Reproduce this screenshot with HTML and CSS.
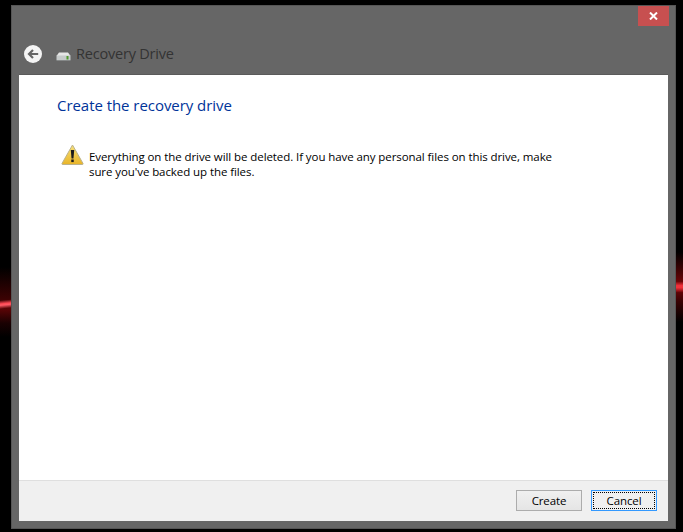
FILE: index.html
```html
<!DOCTYPE html>
<html lang="en">
<head>
<meta charset="utf-8">
<title>Recovery Drive</title>
<link rel="stylesheet" href="styles.css">
</head>
<body>
<div class="glow glow-left"></div>
<div class="glow glow-right"></div>
<div class="window">
  <div class="chrome">
    <div class="caption">
      <button class="close" aria-label="Close">
        <svg width="9" height="8" viewBox="0 0 9 8"><path d="M1 0.5 L8 7.5 M8 0.5 L1 7.5" stroke="#fff" stroke-width="2" fill="none"/></svg>
      </button>
    </div>
    <div class="nav">
      <svg class="back" width="20" height="20" viewBox="0 0 20 20">
        <circle cx="10" cy="10" r="9" fill="#f4f4f4"/>
        <path d="M15.2 10 H6.5 M10 6 L6 10 L10 14" stroke="#666" stroke-width="2.2" fill="none"/>
      </svg>
      <svg class="drive" width="15" height="9" viewBox="0 0 15 9">
        <path d="M3 0.5 H12 L14.5 4 H0.5 Z" fill="#e6e6e6"/>
        <rect x="0.5" y="3.5" width="14" height="4.5" fill="#c6caca"/>
        <rect x="0.5" y="8" width="14" height="1" fill="#858888"/>
        <rect x="10.5" y="4" width="2" height="3.5" fill="#4f9a2c"/>
      </svg>
      <span class="app-title">Recovery Drive</span>
    </div>
  </div>
  <div class="panel">
    <div class="main">
      <h1 class="heading">Create the recovery drive</h1>
      <div class="warning">
        <svg class="warn-icon" width="23" height="21" viewBox="0 0 24 21" preserveAspectRatio="none">
          <defs><linearGradient id="w" x1="0" y1="0" x2="0" y2="1"><stop offset="0" stop-color="#f8e27a"/><stop offset="1" stop-color="#e8b428"/></linearGradient></defs>
          <path d="M12 1 L23 19.5 Q23.3 20.5 22 20.5 H2 Q0.7 20.5 1 19.5 Z" fill="url(#w)" stroke="#b9b08a" stroke-width="1"/>
          <path d="M10.2 6 H13.8 L13 14.5 H11 Z" fill="#1c1c1c"/>
          <rect x="10.7" y="15.5" width="2.6" height="2.6" fill="#1c1c1c"/>
        </svg>
        <p class="warn-text">Everything on the drive will be deleted. If you have any personal files on this drive, make sure you've backed up the files.</p>
      </div>
    </div>
    <div class="footer">
      <button class="btn">Create</button>
      <button class="btn btn-default"><span class="focus">Cancel</span></button>
    </div>
  </div>
</div>
</body>
</html>
```
FILE: styles.css
```css
* { box-sizing: border-box; }
html, body { height: 100%; }
body {
  margin: 0;
  background: #000;
  padding: 5px 7px 3px 11px;
  font-family: "Open Sans", "Noto Sans", sans-serif;
  overflow: hidden;
  position: relative;
}
.glow { position: absolute; height: 70px; }
.glow-left {
  left: 0; top: 267px; width: 11px;
  background:
    linear-gradient(174deg, transparent 47%, #ff4a55 52%, #ff5a65 54%, transparent 59%),
    linear-gradient(180deg, #000 0%, #3a0203 45%, #5a0406 60%, #1a0102 80%, #000 100%);
}
.glow-right {
  right: 0; top: 252px; width: 7px;
  background:
    linear-gradient(180deg, transparent 42%, #f0303a 48%, #f0303a 51%, transparent 58%),
    linear-gradient(180deg, #000 0%, #4a0304 30%, #7a0508 48%, #3a0203 70%, #000 100%);
}
.window {
  height: 100%;
  background: #666;
  border: 1px solid #555;
  padding: 0 7px 7px 7px;
  display: flex;
  flex-direction: column;
}
.chrome { height: 69px; flex: none; }
.caption { display: flex; justify-content: flex-end; margin-right: -1px; }
.close {
  width: 31px; height: 20px; padding: 0; border: 0;
  background: #c75050;
  display: flex; align-items: center; justify-content: center;
}
.nav { display: flex; align-items: center; margin-top: 14px; padding-left: 4px; height: 28px; }
.back { flex: none; }
.drive { flex: none; margin-left: 13px; margin-top: 4px; }
.app-title { margin-left: 5px; font-size: 14.5px; color: #333; letter-spacing: -0.2px; transform: translateY(-1px); }
.panel {
  flex: 1;
  display: flex;
  flex-direction: column;
  background: #fff;
  min-height: 0;
  box-shadow: 0 -1px 0 #5a5a5a;
}
.main { flex: 1; padding: 20px 38px 0; }
.heading {
  margin: 0;
  font-size: 15px;
  line-height: 21px;
  font-weight: 400;
  color: #003399;
  letter-spacing: -0.05px;
}
.warning { display: flex; align-items: flex-start; margin-top: 28px; margin-left: 4px; }
.warn-icon { flex: none; margin-top: 0; }
.warn-text {
  margin: 5px 0 0 5px;
  width: 475px;
  font-size: 11.5px;
  line-height: 15px;
  color: #000;
  letter-spacing: -0.08px;
}
.footer {
  flex: none;
  height: 41px;
  background: #f0f0f0;
  border-top: 1px solid #dfdfdf;
  display: flex;
  justify-content: flex-end;
  align-items: flex-start;
  gap: 9px;
  padding: 9px 11px 0 0;
}
.btn {
  width: 66px; height: 21px; padding: 0;
  border: 1px solid #acacac;
  background: linear-gradient(#f0f0f0, #e5e5e5);
  font-family: inherit;
  font-size: 11.5px;
  letter-spacing: -0.1px;
  color: #000;
}
.btn-default { border-color: #3399ff; padding: 1px; background: #f0f0f0; }
.focus {
  display: flex; align-items: center; justify-content: center;
  width: 100%; height: 100%;
  outline: 1px dotted #000;
  outline-offset: -1px;
}
```
